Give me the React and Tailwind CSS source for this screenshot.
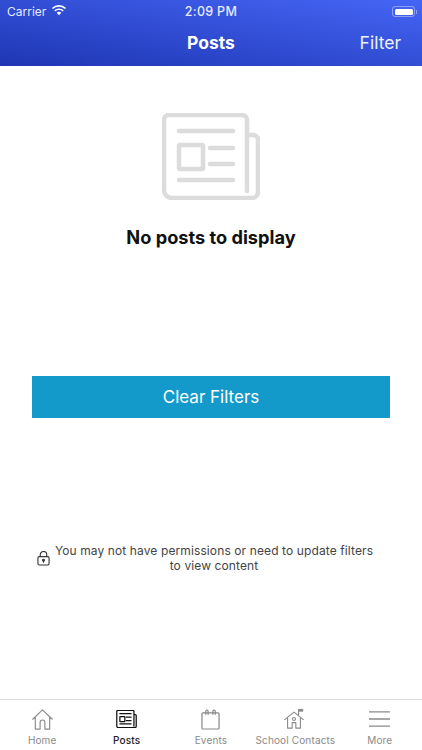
const font = { fontFamily: "Inter, 'Liberation Sans', sans-serif" };

function Newspaper({ className, sw = 4 }) {
  return (
    <svg viewBox="0 0 98 87" className={className} fill="none" stroke="currentColor" strokeWidth={sw} strokeLinecap="round" strokeLinejoin="round">
      <path d="M85 22h6a5 5 0 0 1 5 5v52a6 6 0 0 1-6 6H10a8 8 0 0 1-8-8V7a5 5 0 0 1 5-5h73a5 5 0 0 1 5 5v71" />
      <path d="M17 18h54M17 67h54M48 35h23M48 51h23" />
      <rect x="17" y="32" width="24" height="24" rx="1" />
    </svg>
  );
}

function Tab({ label, active, children }) {
  return (
    <div className="flex flex-col items-center w-[84.4px]">
      <div className="h-[26px] flex items-center justify-center">{children}</div>
      <span className={`text-[10px] leading-[12px] mt-[2px] whitespace-nowrap tracking-[0.15px] ${active ? "text-[#222222] font-medium" : "text-[#8a8a8a]"}`}>{label}</span>
    </div>
  );
}

export default function App() {
  return (
    <div className="w-[422px] h-[750px] bg-white flex flex-col overflow-hidden" style={font}>
      <header className="h-[66px] shrink-0 bg-gradient-to-tr from-[#1f36b4] to-[#4565f5] text-white flex flex-col">
        <div className="h-[22px] flex items-center justify-between pl-[7px] pr-[5px] pt-[1px] relative">
          <div className="flex items-center gap-[5px] text-[12px] text-[#e6eafc]">
            <span>Carrier</span>
            <svg viewBox="0 0 16 12" className="w-[16px] h-[13px] mb-[3px]" fill="white">
              <path d="M8 2.2c2.3 0 4.4.9 6 2.4l1.1-1.2A10.3 10.3 0 0 0 8 .5 10.3 10.3 0 0 0 .9 3.4L2 4.6a8.7 8.7 0 0 1 6-2.4z" />
              <path d="M8 5.6c1.4 0 2.6.5 3.6 1.4l1.1-1.2A7 7 0 0 0 8 3.9a7 7 0 0 0-4.7 1.9L4.4 7c1-.9 2.2-1.4 3.6-1.4z" />
              <path d="M8 7.3c-.9 0-1.7.3-2.3.9L8 10.8l2.3-2.6c-.6-.6-1.4-.9-2.3-.9z" />
            </svg>
          </div>
          <span className="absolute left-0 right-0 text-center text-[12.5px] text-[#e6eafc] font-medium tracking-[0.3px] pt-[2px]">2:09 PM</span>
          <div className="flex items-center">
            <div className="w-[23px] h-[11px] rounded-[3px] border border-white/40 p-[1.5px]">
              <div className="w-full h-full rounded-[1.5px] bg-white" />
            </div>
            <div className="w-[1px] h-[4px] bg-white/40 ml-[1px]" />
          </div>
        </div>
        <div className="flex-1 flex items-center justify-between relative pr-[21px] pb-[2px]">
          <span className="absolute left-0 right-0 text-center text-[17.5px] font-bold">Posts</span>
          <span className="ml-auto text-[17.5px] text-[#eef1fe] pt-[1px]">Filter</span>
        </div>
      </header>

      <main className="flex-1 flex flex-col items-center">
        <Newspaper className="w-[98px] h-[87px] mt-[47px] text-[#dcdcdc]" sw={4.5} />
        <h1 className="mt-[25px] text-[18.2px] leading-[24px] font-bold text-[#111111]">No posts to display</h1>
        <button className="mt-[127px] w-[358px] h-[42px] pt-[1px] bg-[#149aca] text-white text-[17px] font-normal">Clear Filters</button>
        <div className="mt-[125px] w-[358px] flex items-center pl-[5px]">
          <svg viewBox="0 0 14 16" className="w-[13px] h-[15px] shrink-0 text-[#333333]" fill="none" stroke="currentColor" strokeWidth="1.2">
            <rect x="1" y="6" width="12" height="9" rx="1.5" />
            <path d="M3.5 6V4a3.5 3.5 0 0 1 7 0v2" />
            <circle cx="7" cy="10" r="1" fill="currentColor" />
            <path d="M7 10v2.5" />
          </svg>
          <p className="w-[326px] ml-[1px] text-center text-[12px] leading-[15px] tracking-[0.11px] text-[#444444]">
            You may not have permissions or need to update filters to view content
          </p>
        </div>
      </main>

      <nav className="h-[51px] shrink-0 border-t border-[#dedede] flex bg-white pt-[6px]">
        <Tab label="Home">
          <svg viewBox="0 0 24 24" className="w-[23px] h-[23px] text-[#8a8a8a]" fill="none" stroke="currentColor" strokeWidth="1.2" strokeLinejoin="round">
            <path d="M1.5 12 12 2l10.5 10M4.5 10v12h5v-7a2.5 2.5 0 0 1 5 0v7h5V10" />
          </svg>
        </Tab>
        <Tab label="Posts" active>
          <Newspaper className="w-[21px] h-[18px] text-[#111111]" sw={6} />
        </Tab>
        <Tab label="Events">
          <svg viewBox="0 0 20 22" className="w-[19px] h-[21px] text-[#8a8a8a]" fill="none" stroke="currentColor" strokeWidth="1.3">
            <rect x="1" y="4" width="18" height="17" rx="1" />
            <path d="M5 6V2.5a1.2 1.2 0 0 1 2.5 0V6M12.5 6V2.5a1.2 1.2 0 0 1 2.5 0V6" />
          </svg>
        </Tab>
        <Tab label="School Contacts">
          <svg viewBox="0 0 24 24" className="w-[22px] h-[22px] text-[#8a8a8a] -ml-[2px]" fill="none" stroke="currentColor" strokeWidth="1.2" strokeLinejoin="round">
            <path d="M1.5 13 12 4.5 22.5 13M5 11v11h5v-6h4v6h5V11" />
            <circle cx="12" cy="12" r="1.6" />
            <path d="M17 8V1" />
            <path d="M17 1h5v3h-5z" fill="currentColor" stroke="none" />
          </svg>
        </Tab>
        <Tab label="More">
          <svg viewBox="0 0 22 18" className="w-[21px] h-[18px] text-[#8a8a8a]" stroke="currentColor" strokeWidth="1.4">
            <path d="M0 1.5h22M0 9h22M0 16.5h22" />
          </svg>
        </Tab>
      </nav>
    </div>
  );
}
